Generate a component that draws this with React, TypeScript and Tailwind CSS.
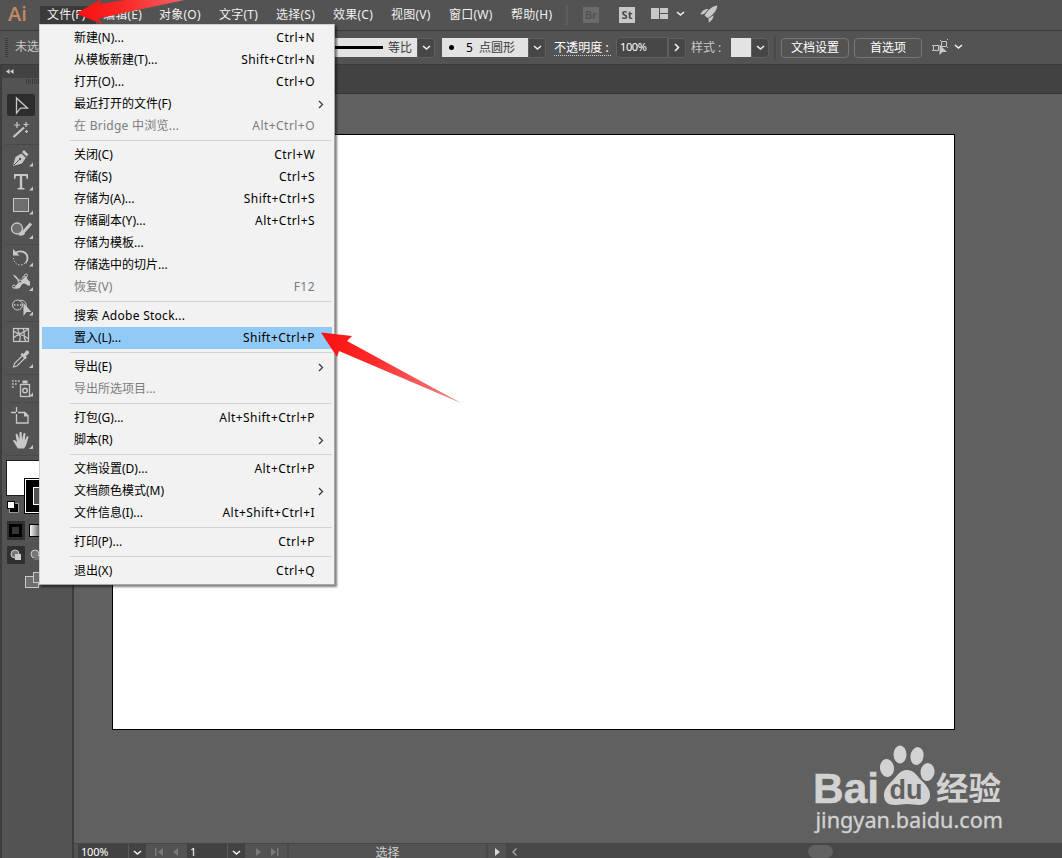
import type { ReactNode } from "react";

interface MenuEntry {
  label: string;
  keys?: string;
  submenu?: boolean;
  disabled?: boolean;
  active?: boolean;
  /** Labels with Latin words are set a little wider. */
  wide?: boolean;
}

const MENU_BAR = [
  { label: "文件(F)", width: "w-14" },
  { label: "编辑(E)", width: "w-14" },
  { label: "对象(O)", width: "w-[60px]" },
  { label: "文字(T)", width: "w-[57px]" },
  { label: "选择(S)", width: "w-[57px]" },
  { label: "效果(C)", width: "w-[58px]" },
  { label: "视图(V)", width: "w-[58px]" },
  { label: "窗口(W)", width: "w-[62px]" },
  { label: "帮助(H)", width: "w-14" },
];

const FILE_MENU: MenuEntry[][] = [
  [
    { label: "新建(N)...", keys: "Ctrl+N" },
    { label: "从模板新建(T)...", keys: "Shift+Ctrl+N" },
    { label: "打开(O)...", keys: "Ctrl+O" },
    { label: "最近打开的文件(F)", submenu: true },
    { label: "在 Bridge 中浏览...", keys: "Alt+Ctrl+O", disabled: true, wide: true },
  ],
  [
    { label: "关闭(C)", keys: "Ctrl+W" },
    { label: "存储(S)", keys: "Ctrl+S" },
    { label: "存储为(A)...", keys: "Shift+Ctrl+S" },
    { label: "存储副本(Y)...", keys: "Alt+Ctrl+S" },
    { label: "存储为模板..." },
    { label: "存储选中的切片..." },
    { label: "恢复(V)", keys: "F12", disabled: true },
  ],
  [
    { label: "搜索 Adobe Stock...", wide: true },
    { label: "置入(L)...", keys: "Shift+Ctrl+P", active: true },
  ],
  [
    { label: "导出(E)", submenu: true },
    { label: "导出所选项目...", disabled: true },
  ],
  [
    { label: "打包(G)...", keys: "Alt+Shift+Ctrl+P" },
    { label: "脚本(R)", submenu: true },
  ],
  [
    { label: "文档设置(D)...", keys: "Alt+Ctrl+P" },
    { label: "文档颜色模式(M)", submenu: true },
    { label: "文件信息(I)...", keys: "Alt+Shift+Ctrl+I" },
  ],
  [{ label: "打印(P)...", keys: "Ctrl+P" }],
  [{ label: "退出(X)", keys: "Ctrl+Q" }],
];

function Chevron({ className = "" }: { className?: string }) {
  return (
    <svg width="9" height="6" viewBox="0 0 9 6" className={className} fill="none" stroke="#f0f0f0" strokeWidth="1.6">
      <path d="M1 1l3.5 3L8 1" />
    </svg>
  );
}

function MenuBar() {
  return (
    <header className="flex h-[30px] shrink-0 items-center bg-[#535353]">
      <div className="w-10 pb-0.5 pl-2 font-['Open_Sans',sans-serif] text-[20px] leading-7 font-semibold text-[#c58863]">
        <span className="inline-block origin-left">Ai</span>
      </div>
      <nav className="flex h-full items-end">
        {MENU_BAR.map((item, i) => (
          <div
            key={item.label}
            className={`${item.width} h-6 pb-1 pl-[7px] text-[12px] leading-[18px] tracking-[0.25px] whitespace-nowrap text-[#f0f0f0] ${
              i === 0 ? "bg-[#3a3a3a]" : ""
            }`}
          >
            {item.label}
          </div>
        ))}
      </nav>
      <div className="ml-[6px] h-5 w-0.5 bg-[#5e5e5e]" />
      <div className="ml-[15px] grid h-4 w-4 place-items-center bg-[#6b6b6b] font-['Open_Sans',sans-serif] text-[11px] font-semibold text-[#4f4f4f]">
        Br
      </div>
      <div className="ml-5 grid h-4 w-4 place-items-center bg-[#c8c8c8] font-['Open_Sans',sans-serif] text-[11px] font-bold text-[#4a4a4a]">
        St
      </div>
      <svg width="17" height="11" className="mb-[3px] ml-4" fill="#c8c8c8">
        <path d="M0 0h8v11H0zM9 0h8v5H9zM9 6h8v5H9z" />
      </svg>
      <Chevron className="mb-[3px] ml-2" />
      <svg width="18" height="18" viewBox="0 0 18 18" className="mb-[2px] ml-[15px]" fill="#c8c8c8">
        <path d="M17.3.4C12.500 1 8 4.500 4.500 10.400L7.500 13C13 10 16.700 6 17.300.4z" />
        <path d="M8.500 4C5 3.500 1.500 6 .4 9.600L4 9zM8.500 13.600l.3 3.800C11.500 16 13.600 13.200 13.500 10.200z" />
      </svg>
    </header>
  );
}

function DropButton({ children }: { children?: ReactNode }) {
  return (
    <div className="grid h-5 w-[18px] shrink-0 place-items-center rounded-r-sm border border-[#606060] bg-[#474747]">
      {children ?? <Chevron />}
    </div>
  );
}

function OptionsBar() {
  return (
    <div className="flex h-[35px] shrink-0 items-center border-t border-b border-[#3a3a3a] bg-[#535353] text-[12px] leading-4 whitespace-nowrap text-[#e6e6e6]">
      <div className="ml-[5px] h-5 w-[3px] bg-[repeating-linear-gradient(to_bottom,#3c3c3c_0_1px,transparent_1px_2px)]" />
      <span className="ml-[7px] w-[285px] pb-0.5 text-[#c8c8c8]">未选择对象</span>
      <div className="flex h-[19px] w-[117px] items-center bg-[#e3e3e3] text-[#3c3c3c]">
        <div className="h-[3px] w-[83px] bg-black" />
        <span className="ml-[5px]">等比</span>
      </div>
      <DropButton />
      <div className="ml-[7px] flex h-[19px] w-[86px] items-center bg-[#e3e3e3] text-[#3c3c3c]">
        <div className="ml-[7px] h-[5px] w-[5px] rounded-full bg-black" />
        <span className="ml-3 text-black">5</span>
        <span className="ml-[6px]">点圆形</span>
      </div>
      <DropButton />
      <span className="ml-2 w-[57px] border-b border-dotted border-[#d0d0d0] leading-[15px] tracking-[0.1px] text-white">
        不透明度 :
      </span>
      <div className="ml-[5px] flex h-[21px] w-[52px] items-center rounded-l-sm border border-[#606060] bg-[#474747] pb-0.5 pl-[3px] text-[11px] tracking-[-0.4px] text-white">
        100%
      </div>
      <DropButton>
        <svg width="6" height="9" viewBox="0 0 6 9" fill="none" stroke="#f0f0f0" strokeWidth="1.6">
          <path d="M1 1l3.500 3.500L1 8" />
        </svg>
      </DropButton>
      <span className="ml-[5px] w-10 text-[#c8c8c8]">样式 :</span>
      <div className="h-[19px] w-5 bg-[#e3e3e3]" />
      <DropButton />
      <div className="ml-[5px] h-6 w-0.5 bg-[#494949]" />
      <button className="ml-[5px] h-5 w-[68px] rounded-sm border border-[#777] leading-[18px] text-white">文档设置</button>
      <button className="ml-[5px] h-5 w-[68px] rounded-sm border border-[#777] leading-[18px] text-white">首选项</button>
      <svg width="17" height="17" viewBox="0 0 17 17" className="ml-[10px]" fill="none" stroke="#c8c8c8">
        <path d="M1.500 6.500h5v5h-5zM9.500 2.500h5v5h-5z" />
        <path d="M0 6.500h1M0 11.500h1M8 1l1 1M15 1l1-1M15 8l1 1" />
        <path d="M7.500 5.500v10.500l3-3h4.500z" fill="#c8c8c8" stroke="none" />
      </svg>
      <Chevron className="mb-px ml-[5px]" />
    </div>
  );
}

function Tool({ children, flyout, height = "h-6" }: { children: ReactNode; flyout?: boolean; height?: string }) {
  return (
    <svg width="40" viewBox="0 0 40 24" className={`${height} shrink-0`} fill="none" stroke="#c8c8c8">
      {children}
      {flyout && <path d="M33 16.500v4h-4z" fill="#c8c8c8" stroke="none" />}
    </svg>
  );
}

function Divider({ className }: { className: string }) {
  return <div className={`${className} mr-[30px] ml-[6px] flex shrink-0 items-center before:h-px before:w-full before:bg-[#494949]`} />;
}

function Toolbar() {
  return (
    <aside className="flex w-[74px] shrink-0 flex-col border-r-2 border-l-2 border-r-[#3d3d3d] border-l-[#3d3d3d] bg-[#535353]">
      <div className="flex h-[13px] shrink-0 items-center bg-[#424242] pl-1">
        <svg width="8" height="5" fill="#d0d0d0">
          <path d="M3.500 0v5L0 2.500zM7.500 0v5L4 2.500z" />
        </svg>
      </div>
      <div className="mt-px ml-6 h-[5px] w-[22px] shrink-0 bg-[repeating-linear-gradient(to_right,#3c3c3c_0_1px,transparent_1px_2px)]" />
      <div className="-ml-[2px] flex flex-col pt-[9px]">
        <Tool>
          <rect x="7" y="1" width="28" height="22" rx="2" fill="#2d2d2d" stroke="none" />
          <path d="M16.500 5v15.200l4-5h7z" strokeWidth="1.3" />
        </Tool>
        <Tool height="h-[25px]">
          <path d="M13.500 19.500L24 10" strokeWidth="2.200" />
          <path d="M26 4.500v5M23.500 7h5M17 4.500v6M14 7.500h6M26.500 12.500v3M25 14h3" strokeWidth="1.200" />
        </Tool>
        <Divider className="h-1" />
        <Tool flyout>
          <path d="M13 20l2.500-9 6-3.500 4.300 4.300L22 17.500z" fill="#c8c8c8" stroke="none" />
          <path d="M22 6l2-2 4.500 4.500-2 2z" fill="#c8c8c8" stroke="none" />
          <path d="M13.500 19.500l6-6" stroke="#535353" />
          <circle cx="20" cy="13" r="1.200" fill="#535353" stroke="none" />
        </Tool>
        <Tool flyout>
          <path d="M14 4h14v5h-1.200L26 6H22.200v11.800l2.300.5v1.200h-7v-1.200l2.300-.5V6H16L15.200 9H14z" fill="#c8c8c8" stroke="none" />
        </Tool>
        <Tool flyout>
          <rect x="13.500" y="4.500" width="15" height="13" fill="#6e6e6e" />
        </Tool>
        <Tool flyout height="h-[25px]">
          <circle cx="17" cy="10" r="5.500" fill="#6e6e6e" strokeWidth="1.300" />
          <path d="M31 5L23 14" strokeWidth="3" />
          <path d="M22.500 12.500c-2.500 0-2 3-4.500 4 3 1.500 6 .5 7-1.500z" fill="#c8c8c8" stroke="none" />
        </Tool>
        <Divider className="h-[3px]" />
        <Tool flyout>
          <path d="M15.500 7C20 3.500 27.500 6 27.500 12c0 2-.8 4-2 5" strokeWidth="1.800" />
          <path d="M25 17c-4 4-11 2-11.500-5" strokeDasharray="1.500 1.500" />
          <path d="M13 3v6.500h6.500z" fill="#c8c8c8" stroke="none" />
        </Tool>
        <Tool flyout height="h-[25px]">
          <path
            d="M13 4c4 1 5 5 7 6 2-1 2-5 5-5 3 1 1 4 5 6v4c-3 1-4-2-6-2-3 0-3 5-6 5-3 1-5-1-6-1 4-1 5-4 6-6-1-3-4-4-5-7z"
            fill="#c8c8c8"
            stroke="none"
          />
          <path d="M14.500 15.500L25 6" stroke="#535353" />
          <circle cx="14" cy="16" r="1.500" fill="#535353" />
          <circle cx="20" cy="11" r="1.500" fill="#535353" />
          <circle cx="26" cy="5" r="1.500" fill="#535353" />
        </Tool>
        <Tool flyout height="h-6">
          <circle cx="17.500" cy="10" r="5" />
          <path d="M19 5.800a5 5 0 1 1 4.500 9" />
          <path d="M14 10h9" strokeDasharray="1.500 1.500" strokeWidth="1.500" />
          <path d="M23.500 8v13l3-4h5z" fill="#c8c8c8" stroke="none" />
        </Tool>
        <Divider className="h-1" />
        <Tool>
          <rect x="13.500" y="5.500" width="15" height="13" strokeWidth="1.200" />
          <path d="M13.500 8c6 5 9 2 15-2M13.500 15c5-5 9-4 15 1M18 5.500c-1 4 5 8 1 13M23 5.500c3 4-1 8 3 13" strokeWidth="1.200" />
        </Tool>
        <Tool flyout height="h-[25px]">
          <path d="M13.500 19.500l1-3.500 8-8 2.500 2.500-8 8z" strokeWidth="1.200" />
          <path d="M20.500 7l1.500-1.500 1.500 1 2.500-3c1.500-1.500 4 .8 2.800 2.500l-3 2.800 1 1.500-1.500 1.500z" fill="#c8c8c8" stroke="none" />
        </Tool>
        <Divider className="h-1" />
        <Tool flyout>
          <rect x="20.500" y="8.500" width="9" height="12" strokeWidth="1.300" />
          <circle cx="25" cy="14.500" r="2.300" strokeWidth="1.400" />
          <path d="M22.500 4.500h5v3h-5z" fill="#c8c8c8" stroke="none" />
          <path d="M12 5h8M12 8h6M12 11h2" strokeWidth="1.700" strokeDasharray="1.700 1.300" />
        </Tool>
        <Divider className="h-1" />
        <Tool>
          <path d="M16.500 3v5M11 8.500h5M18 8.500h7l3 3v7.500H16.500v-9" strokeWidth="1.300" />
          <path d="M24 8v4.500h4.500z" fill="#c8c8c8" stroke="none" />
        </Tool>
        <Tool flyout height="h-[25px]">
          <path
            d="M18 20c-2-3-3.500-5-5-8 1-1 2-.5 4 2L15.500 6c1-1.200 2-.5 2.300.5l1.500 4.500L19.500 4c.8-1 2-.8 2.200.3l.3 6.700L23.500 5c.8-1 2-.5 2 .6l-.7 6.400 2-4c1-.8 1.800 0 1.600 1L26 17l-2 3z"
            fill="#c8c8c8"
            stroke="none"
          />
        </Tool>
        <svg width="72" height="140" viewBox="0 454 72 140" className="shrink-0" fill="none">
          <path d="M6 456.500h36" stroke="#494949" />
          <rect x="6.500" y="461.500" width="35" height="35" fill="#fff" stroke="#1e1e1e" />
          <rect x="24" y="479" width="36" height="36" fill="#000" />
          <rect x="25.500" y="480.500" width="33" height="33" stroke="#fff" />
          <rect x="33.500" y="488.500" width="17" height="17" fill="#535353" stroke="#fff" />
          <rect x="11.500" y="506.500" width="5" height="5" stroke="#000" strokeWidth="3" />
          <rect x="9.500" y="504.500" width="9" height="9" stroke="#ccc" strokeWidth=".6" />
          <rect x="7.500" y="502.500" width="7" height="7" fill="#fff" stroke="#000" />
          <rect x="7" y="522" width="18" height="19" fill="#2f2f2f" />
          <rect x="10.500" y="526.500" width="10" height="10" fill="#363636" stroke="#000" strokeWidth="3" />
          <rect x="29.500" y="525.500" width="12" height="12" fill="url(#swatch-gradient)" stroke="#000" />
          <rect x="7" y="547" width="18" height="18" rx="1" fill="#2f2f2f" />
          <circle cx="15" cy="555" r="4" fill="#777" stroke="#ccc" />
          <rect x="15" y="555" width="6" height="6" fill="#ccc" />
          <circle cx="35" cy="555" r="4" fill="#777" stroke="#ccc" />
          <path d="M34 557h6v4h-6z" fill="#777" />
          <rect x="25.500" y="577.500" width="13" height="11" fill="#6e6e6e" stroke="#c8c8c8" />
          <rect x="33.500" y="573.500" width="10" height="10" fill="#6e6e6e" stroke="#c8c8c8" />
          <defs>
            <linearGradient id="swatch-gradient">
              <stop stopColor="#fff" />
              <stop offset="1" stopColor="#444" />
            </linearGradient>
          </defs>
        </svg>
      </div>
    </aside>
  );
}

function Watermark() {
  return (
    <svg width="200" height="95" viewBox="810 743 200 95" fill="#d2d2d2">
      <text
        x="813"
        y="803"
        fontFamily="Liberation Sans"
        fontWeight="700"
        fontSize="42"
        textLength="66"
        lengthAdjust="spacingAndGlyphs"
        stroke="#d2d2d2"
        strokeWidth=".5"
      >
        Bai
      </text>
      <ellipse cx="887" cy="768" rx="7" ry="9" transform="rotate(-8 887 768)" />
      <ellipse cx="900" cy="754.500" rx="6.500" ry="9" />
      <ellipse cx="917" cy="756" rx="6.500" ry="9" transform="rotate(10 917 756)" />
      <ellipse cx="927.500" cy="772" rx="7" ry="9" transform="rotate(8 927 772)" />
      <path d="M907 770c7 0 10 6 14 10 5 5 9 9 9 15 0 6-4 10-11 10-4 0-8-1-12-1s-8 1-12 1c-8 0-11-4-11-10 0-6 4-10 9-15 4-4 7-10 14-10z" />
      <text x="889.500" y="799" fontFamily="Liberation Sans" fontWeight="700" fontSize="27" textLength="33" lengthAdjust="spacingAndGlyphs" fill="#606060">
        du
      </text>
      <text x="936" y="800" fontFamily="Noto Sans CJK SC" fontWeight="700" fontSize="32" textLength="65" lengthAdjust="spacingAndGlyphs">
        经验
      </text>
      <text x="815.500" y="828" fontFamily="Noto Sans" fontWeight="400" fontSize="21" textLength="187.500" lengthAdjust="spacingAndGlyphs" stroke="#d2d2d2" strokeWidth=".3">
        jingyan.baidu.com
      </text>
    </svg>
  );
}

function StatusBar() {
  return (
    <footer className="flex h-[15px] shrink-0 border-t border-[#464646] bg-[#535353] text-[11px] leading-[15px] text-white">
      <div className="ml-1 h-[14px] w-[50px] bg-[#424242] pl-[3px] tracking-[-0.2px]">100%</div>
      <div className="flex w-[18px] justify-center border-l border-[#5a5a5a] bg-[#424242] pt-[6px]">
        <Chevron />
      </div>
      <svg width="41" height="14" fill="#7a7a7a">
        <path d="M9 4h1.500v8H9zM17 4v8l-5-4zM32 4v8l-5-4z" />
      </svg>
      <div className="w-10 bg-[#424242] pl-[3px]">1</div>
      <div className="flex w-[18px] justify-center border-l border-[#5a5a5a] bg-[#424242] pt-[6px]">
        <Chevron />
      </div>
      <svg width="42" height="14" fill="#7a7a7a">
        <path d="M11 4v8l5-4zM26 4v8l5-4zM32 4h1.500v8H32z" />
      </svg>
      <div className="w-[201px] border-x-2 border-[#494949] text-center text-[12px] leading-[18px] text-[#d0d0d0]">选择</div>
      <svg width="18" height="14" fill="#d8d8d8">
        <path d="M7 4v8l5-4z" />
      </svg>
      <div className="flex flex-1 bg-[#484848]">
        <svg width="18" height="14" fill="none" stroke="#a8a8a8" strokeWidth="1.300">
          <path d="M10.500 4.500L7 8l3.500 3.500" />
        </svg>
        <div className="mt-px ml-[284px] h-[13px] w-[25px] rounded-lg bg-[#626262]" />
      </div>
    </footer>
  );
}

function FileMenu() {
  return (
    <div className="absolute top-6 left-[39px] w-[296px] border border-[#a8a8a8] border-t-[#cfcfcf] border-l-[#cfcfcf] bg-[#f2f2f2] px-0.5 pt-0.5 pb-0.5 text-[12px] text-black shadow-[2px_2px_2px_rgba(0,0,0,0.5)]">
      {FILE_MENU.map((group, i) => (
        <div key={i}>
          {i > 0 && (
            <div className="flex h-[7px] items-center pl-7">
              <div className="h-px w-full bg-[#d2d2d2]" />
            </div>
          )}
          {group.map((entry) => (
            <div
              key={entry.label}
              className={`flex h-[22px] items-center pr-[17px] pl-8 leading-[22px] whitespace-nowrap ${
                entry.active ? "bg-[#91c9f7]" : ""
              } ${entry.disabled ? "text-[#7c7c7c]" : ""}`}
            >
              <span className={entry.wide ? "flex-1 tracking-[0.27px]" : "flex-1"}>{entry.label}</span>
              {entry.keys && <span className="tracking-[0.45px]">{entry.keys}</span>}
              {entry.submenu && (
                <svg width="6" height="9" viewBox="0 0 6 9" className="-mr-[9px]" fill="none" stroke="#333" strokeWidth="1.200">
                  <path d="M1 1l3.500 3.500L1 8" />
                </svg>
              )}
            </div>
          ))}
        </div>
      ))}
    </div>
  );
}

function PointerArrows() {
  return (
    <svg width="480" height="420" className="pointer-events-none absolute top-0 left-0">
      <defs>
        <linearGradient id="arrow-top" x1="78" y1="13" x2="187" y2="0" gradientUnits="userSpaceOnUse">
          <stop stopColor="#fa1010" />
          <stop offset="0.400" stopColor="#fb2626" />
          <stop offset="1" stopColor="#f06666" />
        </linearGradient>
        <linearGradient id="arrow-place" x1="322" y1="333" x2="462" y2="403" gradientUnits="userSpaceOnUse">
          <stop stopColor="#fa0f0f" />
          <stop offset="0.350" stopColor="#fb2828" />
          <stop offset="1" stopColor="#f08a8a" />
        </linearGradient>
      </defs>
      <path d="M76 13.500L101.500-1 99 4 132-1h57L98 18.500l4 5.500z" fill="url(#arrow-top)" />
      <path d="M321 332.500l31 3.500-5 5 115 62.500L339 351l-2 6z" fill="url(#arrow-place)" />
    </svg>
  );
}

export default function App() {
  return (
    <div className="relative flex h-[858px] w-[1062px] flex-col overflow-hidden bg-[#535353] font-['Noto_Sans','Noto_Sans_CJK_SC',sans-serif]">
      <MenuBar />
      <OptionsBar />
      <div className="flex min-h-0 flex-1">
        <Toolbar />
        <main className="flex min-w-0 flex-1 flex-col">
          <div className="h-[29px] shrink-0 border-b border-[#363636] bg-[#424242]" />
          <div className="flex-1 overflow-hidden bg-[#606060] pt-10 pl-[38px]">
            <div className="h-[596px] w-[843px] border border-black bg-white" />
          </div>
          <StatusBar />
        </main>
      </div>
      <div className="pointer-events-none absolute top-[743px] left-[810px]">
        <Watermark />
      </div>
      <FileMenu />
      <PointerArrows />
    </div>
  );
}
